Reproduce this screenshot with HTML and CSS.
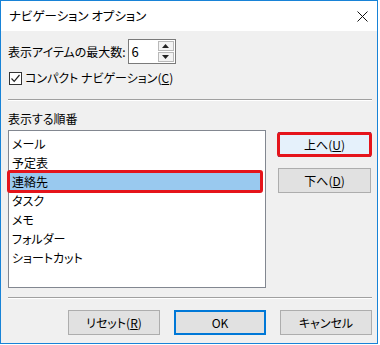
FILE: index.html
```html
<!DOCTYPE html>
<html lang="ja">
<head>
<meta charset="utf-8">
<title>ナビゲーション オプション</title>
<link rel="stylesheet" href="styles.css">
</head>
<body>
<div class="window">
  <div class="titlebar">
    <span class="title">ナビゲーション オプション</span>
    <svg class="close" width="11" height="11" viewBox="0 0 11 11"><path d="M0.5 0.5L10.5 10.5M10.5 0.5L0.5 10.5" stroke="#111" stroke-width="1" fill="none"/></svg>
  </div>
  <div class="content">
    <div class="row-max">
      <span class="label">表示アイテムの最大数:</span>
      <div class="spin">
        <span class="spin-val">6</span>
        <div class="spin-btns">
          <div class="spin-btn"><svg width="7" height="4" viewBox="0 0 7 4"><path d="M0 4L3.5 0L7 4Z" fill="#222"/></svg></div>
          <div class="spin-btn"><svg width="7" height="4" viewBox="0 0 7 4"><path d="M0 0L3.5 4L7 0Z" fill="#222"/></svg></div>
        </div>
      </div>
    </div>
    <div class="row-check">
      <span class="cbox"><svg width="11" height="11" viewBox="0 0 11 11"><path d="M1.5 5.5L4.2 8.3L9.5 2" stroke="#222" stroke-width="1.2" fill="none"/></svg></span>
      <span class="label">コンパクト ナビゲーション(<u>C</u>)</span>
    </div>
    <div class="sep"></div>
    <div class="group-label">表示する順番</div>
    <div class="list-row">
      <ul class="list">
        <li class="item">メール</li>
        <li class="item">予定表</li>
        <li class="item selected">連絡先<span class="mark mark-item"></span></li>
        <li class="item">タスク</li>
        <li class="item">メモ</li>
        <li class="item">フォルダー</li>
        <li class="item">ショートカット</li>
      </ul>
      <div class="side-btns">
        <button class="btn btn-hot">上へ(<u>U</u>)<span class="mark mark-btn"></span></button>
        <button class="btn">下へ(<u>D</u>)</button>
      </div>
    </div>
    <div class="sep sep-bottom"></div>
    <div class="footer">
      <button class="btn">リセット(<u>R</u>)</button>
      <button class="btn btn-default">OK</button>
      <button class="btn">キャンセル</button>
    </div>
  </div>
</div>
</body>
</html>
```

FILE: styles.css
```css
* { box-sizing: border-box; }
html, body { margin: 0; padding: 0; background: #ffffff; }
body {
  font-family: "Noto Sans CJK JP", "Noto Sans", sans-serif;
  font-size: 12px;
  color: #000;
  font-feature-settings: "palt";
}
.window {
  width: 378px;
  height: 344px;
  border: 1px solid #1883d7;
  background: #f0f0f0;
  display: flex;
  flex-direction: column;
}
.titlebar {
  height: 30px;
  background: #ffffff;
  display: flex;
  align-items: center;
  justify-content: space-between;
  padding: 0 9px 0 8px;
  flex: none;
}
.title { font-size: 12.5px; line-height: 16px; }
.close { display: block; margin-top: 1px; }
.content {
  padding: 0 5px 0 7px;
  display: flex;
  flex-direction: column;
}
.row-max {
  margin-top: 8px;
  height: 25px;
  display: flex;
  align-items: center;
}
.label { line-height: 16px; white-space: nowrap; }
.spin {
  margin-left: 2px;
  width: 48px;
  height: 25px;
  background: #fff;
  border: 1px solid #7a7a7a;
  display: flex;
  align-items: center;
  justify-content: space-between;
  padding: 1px 1px 1px 3px;
}
.spin-val { font-size: 13px; line-height: 16px; }
.spin-btns {
  width: 16px;
  height: 21px;
  display: flex;
  flex-direction: column;
  gap: 1px;
}
.spin-btn {
  flex: 1;
  border: 1px solid #b9b9b9;
  background: #f3f3f3;
  display: flex;
  align-items: center;
  justify-content: center;
}
.spin-btn svg { display: block; }
.row-check {
  margin-top: 5px;
  height: 18px;
  display: flex;
  align-items: center;
  gap: 3px;
  padding-left: 1px;
}
.cbox {
  width: 13px;
  height: 13px;
  border: 1px solid #333;
  background: #fff;
  display: flex;
  align-items: center;
  justify-content: center;
}
.cbox svg { display: block; }
.sep {
  margin-top: 12px;
  height: 2px;
  border-top: 1px solid #a0a0a0;
  border-bottom: 1px solid #ffffff;
}
.group-label {
  margin-top: 10px;
  line-height: 16px;
}
.list-row {
  margin-top: 3px;
  display: flex;
  align-items: flex-start;
  gap: 12px;
}
.list {
  list-style: none;
  margin: 0;
  width: 258px;
  height: 158px;
  background: #fff;
  border: 1px solid #828790;
  padding: 3px 1px 0 1px;
}
.item {
  position: relative;
  height: 19px;
  line-height: 19px;
  padding-left: 2px;
  white-space: nowrap;
}
.item.selected { background: #99c9ef; margin-right: 2px; }
.mark {
  position: absolute;
  border: 3px solid #e5141b;
  border-radius: 3px;
  pointer-events: none;
}
.mark-item { left: -3px; top: -2px; right: -1px; bottom: -2px; }
.side-btns {
  margin-top: 2px;
  display: flex;
  flex-direction: column;
  gap: 11px;
}
.btn {
  position: relative;
  width: 93px;
  height: 25px;
  border: 1px solid #adadad;
  background: #e1e1e1;
  font-family: inherit;
  font-size: 12px;
  font-feature-settings: "palt";
  color: #000;
  padding: 0;
  line-height: 16px;
}
.btn-hot { background: #e5f1fb; border-color: #0078d7; }
.mark-btn { left: -2px; top: -1px; right: -2px; bottom: -1px; }
.btn-default { border: 2px solid #0078d7; }
.sep-bottom { margin-top: 9px; }
.footer {
  margin-top: 11px;
  display: flex;
  justify-content: flex-end;
  gap: 14px;
}
.footer .btn { width: 92px; }
```
